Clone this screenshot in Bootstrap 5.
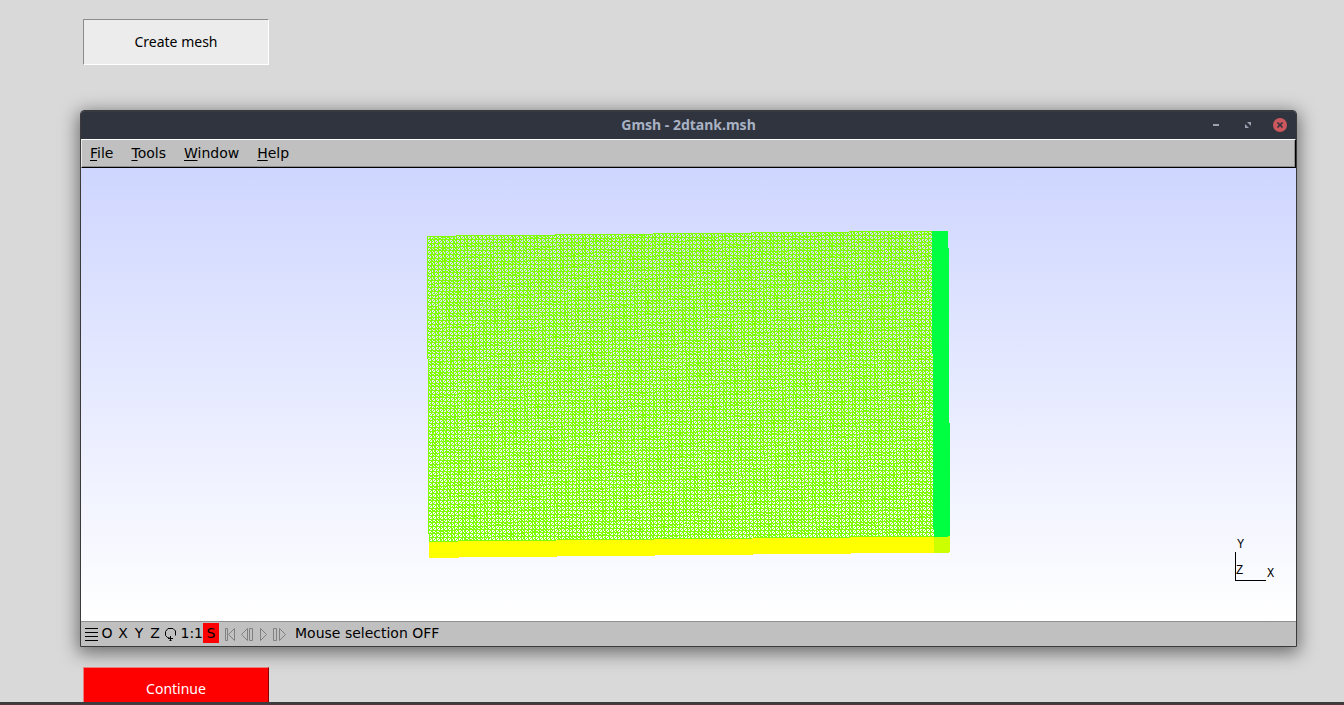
<!DOCTYPE html>
<html lang="en">
<head>
<meta charset="utf-8">
<meta name="viewport" content="width=device-width, initial-scale=1">
<title>Gmsh - 2dtank.msh</title>
<link href="https://cdn.jsdelivr.net/npm/bootstrap@5.3.0/dist/css/bootstrap.min.css" rel="stylesheet">
<style>
  body { background: #d9d9d9; color: #000; font-family: "DejaVu Sans", sans-serif; font-size: 14px; line-height: 20px; }
  .desk { padding: 19px 47px 0 80px; }
  .tk-btn { width: 186px; height: 46px; margin-left: 3px; border-radius: 0; font-family: "Noto Sans", sans-serif; font-size: 14px; line-height: 20px; padding: 0; flex: none; }
  .tk-create, .tk-create:hover { background: #ececec; color: #000; border: 1px solid; border-color: #8c8c8c #fff #fff #8c8c8c; }
  .tk-continue, .tk-continue:hover { height: 44px; background: #f00; color: #fff; border: 1px solid; border-color: #e88080 #8a0000 #8a0000 #e88080; }
  .continue-area { height: 35px; flex: none; }
  .gmsh { margin: 45px 0 20px; min-height: 0; border: 1px solid #3a3a3a; border-radius: 4px 4px 0 0; box-shadow: 0 4px 18px 2px rgba(0,0,0,.5); }
  .titlebar { height: 28px; background: #2f343f; border-top: 1px solid #353a44; border-radius: 3px 3px 0 0; padding-bottom: 1px; flex: none; }
  .titlebar h1 { font: bold 14px/20px "Noto Sans", sans-serif; color: #a9b2c3; }
  .win-tools { padding-right: 9px; gap: 18px; }
  .win-tools button, .status button { background: none; border: 0; padding: 0; color: inherit; line-height: 20px; }
  .win-tools button { width: 14px; height: 14px; display: flex; }
  .menus { height: 29px; background: #c0c0c0; border: 1px solid; border-color: #fff #000 #000 #e8e8e8; box-shadow: inset -1px -1px #8f8f8f; padding: 0 8px 2px; gap: 18px; flex: none; }
  .menus a { color: #000; text-decoration: none; }
  .menus u { text-underline-offset: 2px; }
  .scene { background: linear-gradient(#cfd6ff, #fff); min-height: 0; }
  .axes { right: 20px; bottom: 38px; }
  .axes text { font: 12px "Liberation Mono", monospace; }
  .status { height: 25px; background: #c0c0c0; border-top: 1px solid #909090; padding: 0 4px 2px; flex: none; }
  .status button { width: 16px; height: 20px; text-align: center; flex: none; }
  .status .options { width: 14px; }
  .status .ratio { width: 24px; text-align: right; white-space: nowrap; }
  .status .snap { background: #f00; }
  .status svg, .win-tools svg { display: block; }
  .status output { padding-left: 12px; }
  .panel-edge { height: 3px; background: linear-gradient(#3c3c3f 0 66%, #51333f 66%); flex: none; }
</style>
</head>
<body>
<div class="d-flex flex-column vh-100 overflow-hidden">
  <main class="desk d-flex flex-column flex-grow-1 overflow-hidden">
    <button type="button" class="btn tk-btn tk-create">Create mesh</button>

    <section class="gmsh d-flex flex-column flex-grow-1" aria-label="Gmsh window">
      <header class="titlebar d-flex align-items-center position-relative">
        <h1 class="m-0 w-100 text-center">Gmsh - 2dtank.msh</h1>
        <div class="win-tools d-flex position-absolute end-0">
          <button type="button" aria-label="Minimize"><svg width="14" height="14"><path d="M4 7h6" stroke="#9aa2b1" stroke-width="2"/></svg></button>
          <button type="button" aria-label="Maximize"><svg width="14" height="14" fill="#9aa2b1"><path d="M6 4h4v4zM4 6v4h4z"/></svg></button>
          <button type="button" aria-label="Close"><svg width="14" height="14"><circle cx="7" cy="7" r="7" fill="#cc575d"/><path d="M4.500 4.500l5 5M9.500 4.500l-5 5" stroke="#2f343f" stroke-width="1.600"/></svg></button>
        </div>
      </header>
      <nav class="menus d-flex align-items-center" aria-label="Main menu">
        <a href="#file"><u>F</u>ile</a>
        <a href="#tools"><u>T</u>ools</a>
        <a href="#window"><u>W</u>indow</a>
        <a href="#help"><u>H</u>elp</a>
      </nav>
      <div class="scene d-flex flex-grow-1 align-items-center justify-content-center position-relative overflow-hidden">
        <canvas id="mesh" width="523" height="327" aria-label="Mesh of the 2D tank"></canvas>
        <svg class="axes position-absolute" width="42" height="44" shape-rendering="crispEdges">
          <path d="M1.500 13v28.500H32" fill="none" stroke="#000"/>
          <text x="3" y="9">Y</text><text x="2" y="35">Z</text><text x="33" y="38">X</text>
        </svg>
      </div>
      <footer class="status d-flex align-items-center">
        <button type="button" class="options" aria-label="Options"><svg width="14" height="20" stroke="#000" shape-rendering="crispEdges"><path d="M0 5.500h13M0 9.500h13M0 13.500h13M0 17.500h13"/></svg></button>
        <button type="button">O</button>
        <button type="button">X</button>
        <button type="button">Y</button>
        <button type="button">Z</button>
        <button type="button" aria-label="Rotate"><svg width="16" height="20" fill="none" stroke="#000"><path d="M7.500 15.500L4.500 14.500L2.500 12.500V8.500L5 5.500H10L12.500 8V12.500M7.500 13v5"/><path d="M5 15.500h5M6.500 17.500h2"/></svg></button>
        <button type="button" class="ratio">1:1</button>
        <button type="button" class="snap">S</button>
        <button type="button" disabled aria-label="Rewind"><svg width="16" height="20" fill="none" stroke="#808080"><path d="M6.500 5.500h2v12h-2zM15.500 5.500v12L9.500 11.500z"/></svg></button>
        <button type="button" disabled aria-label="Step back"><svg width="18" height="20" fill="none" stroke="#808080"><path d="M12.500 5.500v12L6.500 11.500zM14.500 5.500h3v12h-3z"/></svg></button>
        <button type="button" disabled aria-label="Play"><svg width="16" height="20" fill="none" stroke="#808080"><path d="M9.500 5.500v12L15.500 11.500z"/></svg></button>
        <button type="button" disabled aria-label="Step forward"><svg width="20" height="20" fill="none" stroke="#808080"><path d="M6.500 5.500h3v12h-3zM12.500 5.500v12l6-6z"/></svg></button>
        <output>Mouse selection OFF</output>
      </footer>
    </section>

    <div class="continue-area overflow-hidden">
      <button type="button" class="btn tk-btn tk-continue">Continue</button>
    </div>
  </main>
  <div class="panel-edge"></div>
</div>
<script>
  // Triangulated tank: structured coarse region plus two refined boundary layers.
  const ctx = document.getElementById('mesh').getContext('2d');
  const place = (x, y) => [x + y / 175 + 0.3, 5.3 - x / 98 + y];
  function line(x0, y0, x1, y1) {
    const [ax, ay] = place(x0, y0), [bx, by] = place(x1, y1);
    const n = Math.max(1, Math.ceil(Math.max(Math.abs(bx - ax), Math.abs(by - ay))));
    for (let i = 0; i <= n; i++)
      ctx.fillRect(Math.floor(ax + (bx - ax) * i / n), Math.floor(ay + (by - ay) * i / n), 1, 1);
  }
  function region(x0, y0, x1, y1, nx, ny, color) {
    ctx.fillStyle = color;
    const dx = (x1 - x0) / nx, dy = (y1 - y0) / ny;
    for (let i = 0; i <= nx; i++) line(x0 + i * dx, y0, x0 + i * dx, y1);
    for (let j = 0; j <= ny; j++) line(x0, y0 + j * dy, x1, y0 + j * dy);
    for (let i = 0; i < nx; i++) for (let j = 0; j < ny; j++)
      line(x0 + i * dx, y0 + (j + 1) * dy, x0 + (i + 1) * dx, y0 + j * dy);
  }
  region(0, 0, 505, 305, 137, 83, '#80ff00');
  region(505, 0, 520.6, 305, 32, 610, '#00ff40');
  region(0, 306, 505, 321, 1010, 30, '#ffff00');
  region(505, 306, 520.6, 321, 32, 30, '#ccff00');
</script>
<script src="https://cdn.jsdelivr.net/npm/bootstrap@5.3.0/dist/js/bootstrap.bundle.min.js"></script>
</body>
</html>
